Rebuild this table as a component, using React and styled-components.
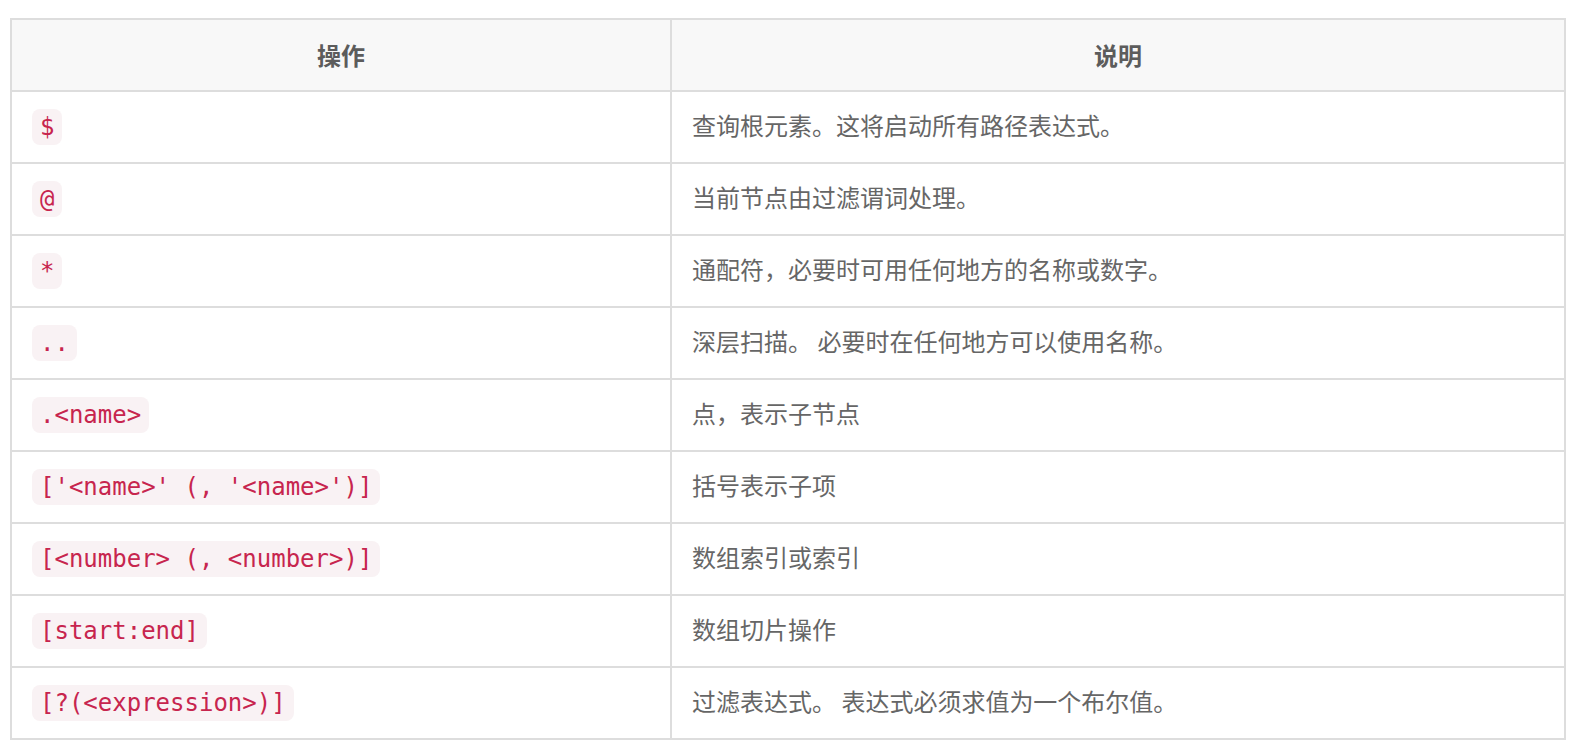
import React from "react";
import styled, { createGlobalStyle } from "styled-components";

const Global = createGlobalStyle`
  *, *::before, *::after { box-sizing: border-box; }
  html, body { margin: 0; padding: 0; background: #fff; }
  body { font-family: "Noto Sans CJK SC", "Noto Sans", sans-serif; }
`;

const Page = styled.div`
  padding: 18px 10px;
`;

const Table = styled.table`
  width: 100%;
  table-layout: fixed;
  border-collapse: separate;
  border-spacing: 0;
  border-top: 2px solid #dddddd;
  border-left: 2px solid #dddddd;
  font-size: 24px;
  color: #666666;
`;

const HeadCell = styled.th`
  width: ${(p) => p.$w || "auto"};
  height: 72px;
  padding: 0 20px 2px;
  background: #f8f8f8;
  border-right: 2px solid #dddddd;
  border-bottom: 2px solid #dddddd;
  text-align: center;
  vertical-align: middle;
  font-weight: 700;
  color: #5c5c5c;
`;

const Cell = styled.td`
  height: 72px;
  padding: 0 20px ${(p) => (p.$text ? "6px" : "2px")};
  border-right: 2px solid #dddddd;
  border-bottom: 2px solid #dddddd;
  text-align: left;
  vertical-align: middle;
  white-space: nowrap;
`;

const Code = styled.code`
  display: inline-block;
  padding: 3px 8px;
  line-height: 30px;
  font-family: "DejaVu Sans Mono", "Liberation Mono", monospace;
  font-size: 24px;
  color: #c7254e;
  background: #f9f2f4;
  border-radius: 8px;
  white-space: pre;
`;

const rows = [
  ["$", "查询根元素。这将启动所有路径表达式。"],
  ["@", "当前节点由过滤谓词处理。"],
  ["*", "通配符，必要时可用任何地方的名称或数字。"],
  ["..", "深层扫描。 必要时在任何地方可以使用名称。"],
  [".<name>", "点，表示子节点"],
  ["['<name>' (, '<name>')]", "括号表示子项"],
  ["[<number> (, <number>)]", "数组索引或索引"],
  ["[start:end]", "数组切片操作"],
  ["[?(<expression>)]", "过滤表达式。 表达式必须求值为一个布尔值。"],
];

export default function App() {
  return (
    <Page>
      <Global />
      <Table>
        <thead>
          <tr>
            <HeadCell $w="660px">操作</HeadCell>
            <HeadCell>说明</HeadCell>
          </tr>
        </thead>
        <tbody>
          {rows.map(([op, desc]) => (
            <tr key={op}>
              <Cell>
                <Code>{op}</Code>
              </Cell>
              <Cell $text>{desc}</Cell>
            </tr>
          ))}
        </tbody>
      </Table>
    </Page>
  );
}
